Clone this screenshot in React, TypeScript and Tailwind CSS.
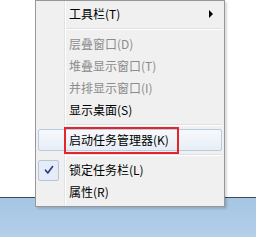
import React from 'react';

const font = { fontFamily: '"Noto Sans CJK SC", "Microsoft YaHei", sans-serif' };

type Item =
    | { kind: 'item'; label: string; disabled?: boolean; submenu?: boolean; checked?: boolean; hot?: boolean }
    | { kind: 'sep' };

const items: Item[] = [
    { kind: 'item', label: '工具栏(T)', submenu: true },
    { kind: 'sep' },
    { kind: 'item', label: '层叠窗口(D)', disabled: true },
    { kind: 'item', label: '堆叠显示窗口(T)', disabled: true },
    { kind: 'item', label: '并排显示窗口(I)', disabled: true },
    { kind: 'item', label: '显示桌面(S)' },
    { kind: 'sep' },
    { kind: 'item', label: '启动任务管理器(K)', hot: true },
    { kind: 'sep' },
    { kind: 'item', label: '锁定任务栏(L)', checked: true },
    { kind: 'item', label: '属性(R)' },
];

function CheckMark() {
    return (
        <svg width="10" height="10" viewBox="0 0 10 10">
            <path d="M1.5 5.2 L3.8 8 L8.6 1.6" fill="none" stroke="#1f3a8a" strokeWidth="1.6" strokeLinecap="round" strokeLinejoin="round" />
        </svg>
    );
}

export default function App() {
    return (
        <div className="relative w-[256px] h-[237px] overflow-hidden flex flex-col bg-white" style={font}>
            <div className="flex-1 bg-white" />
            <div className="h-[40px] border-t border-[#3e4a58] bg-gradient-to-b from-[#a6c5e4] to-[#b3cfe9]" />

            {/* context menu */}
            <div className="absolute left-[35px] top-0 w-[190px] h-[207px] border border-[#979797] bg-[#f0f0f0] p-[2px] shadow-[2px_2px_2px_rgba(0,0,0,0.15)]">
                <div className="absolute left-[28px] top-0 bottom-0 w-px bg-[#e2e3e3]" />
                <div className="absolute left-[29px] top-0 bottom-0 w-px bg-white" />

                <div className="relative flex flex-col">
                    {items.map((it, i) =>
                        it.kind === 'sep' ? (
                            <div key={i} className="h-[8px] flex flex-col justify-center ml-[28px]">
                                <div className="h-px bg-[#e0e0e0]" />
                                <div className="h-px bg-white" />
                            </div>
                        ) : (
                            <div
                                key={i}
                                className={`relative h-[22px] flex items-center text-[12px] leading-none ${
                                    it.hot ? 'rounded-[2px] border border-[#b9cbe0] bg-gradient-to-b from-[#f6f9fc] to-[#e8eef6]' : 'border border-transparent'
                                } ${it.disabled ? 'text-[#8c8c8c]' : 'text-black'}`}
                            >
                                <div className="w-[21px] h-[21px] flex items-center justify-center shrink-0 -ml-px">
                                    {it.checked && (
                                        <div className="w-[21px] h-[21px] rounded-[2px] border border-[#b3c6dd] bg-[#e5ecf5] flex items-center justify-center">
                                            <CheckMark />
                                        </div>
                                    )}
                                </div>
                                <span className="ml-[10px]">{it.label}</span>
                                {it.submenu && (
                                    <span className="ml-auto mr-[8px] w-0 h-0 border-y-[4px] border-y-transparent border-l-[4px] border-l-black" />
                                )}
                                {it.hot && (
                                    <div className="absolute left-[25px] top-[-3px] w-[115px] h-[27px] border-2 border-[#e2262b]" />
                                )}
                            </div>
                        )
                    )}
                </div>
            </div>
        </div>
    );
}
